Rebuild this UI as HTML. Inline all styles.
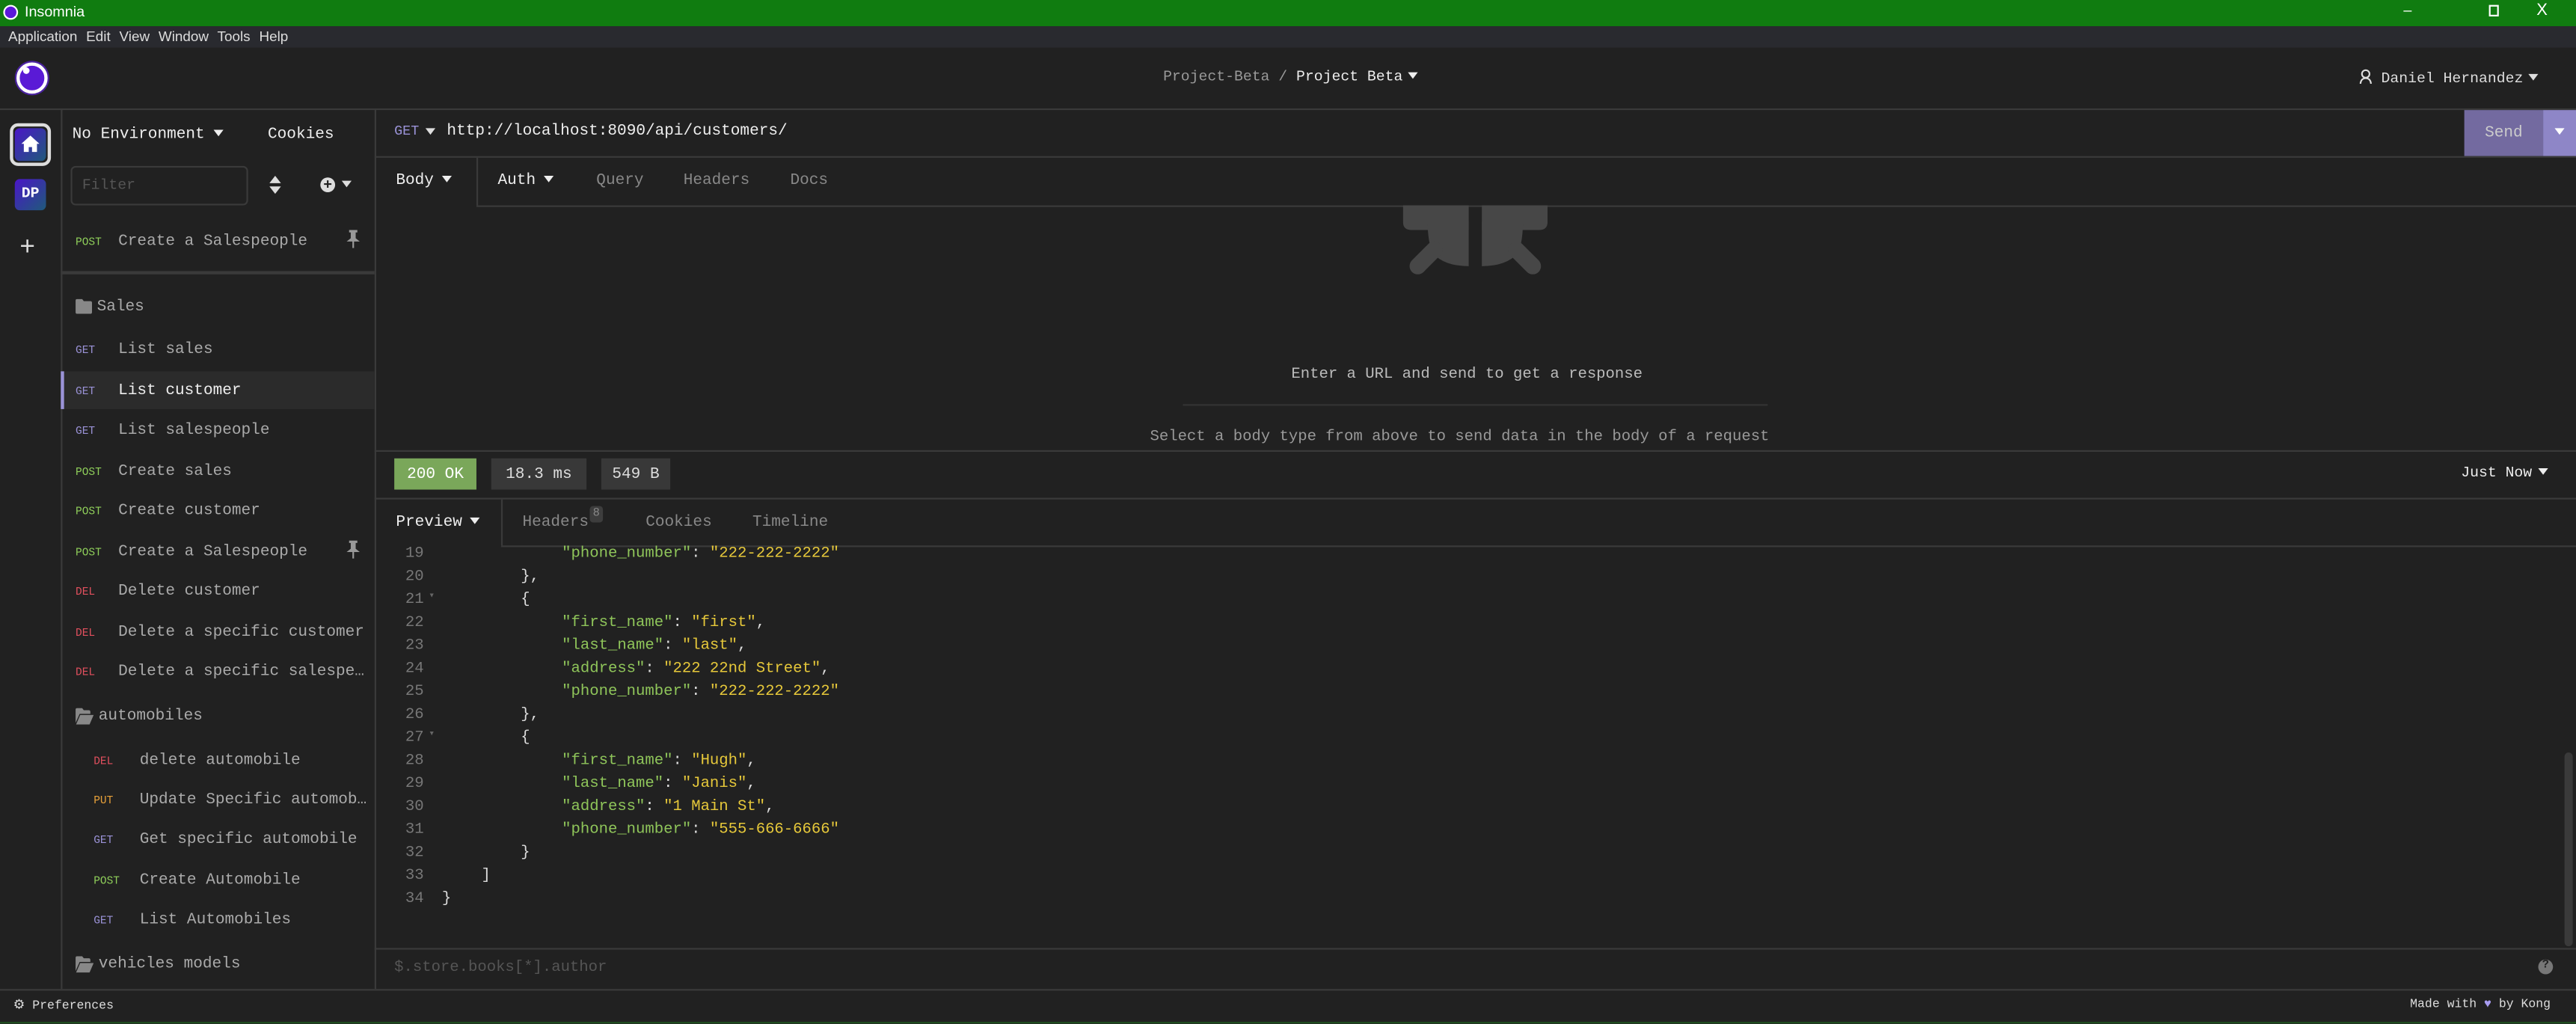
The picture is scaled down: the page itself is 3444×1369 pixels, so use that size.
<!DOCTYPE html>
<html><head><meta charset="utf-8">
<style>
*{margin:0;padding:0;box-sizing:border-box}
html,body{width:3444px;height:1369px;overflow:hidden;background:#212121}
#w{position:absolute;left:0;top:0;width:1568px;height:623px;transform:scale(2.19643);transform-origin:0 0;background:#212121;font-family:"Liberation Mono",monospace;color:#ddd;font-size:9.6px}
.a{position:absolute;white-space:nowrap}
.hl{position:absolute;background:#3a3a3a}
.vl{position:absolute;background:#3a3a3a;width:1px}
.m{font-size:6.6px}
.get{color:#9b93d8}.post{color:#8fcf5a}.del{color:#e2505e}.put{color:#e8a13a}
.it{color:#aaa}
.tri{display:inline-block;width:0;height:0;border-left:3px solid transparent;border-right:3px solid transparent;border-top:4px solid currentColor;vertical-align:middle;margin-left:3px}
.k{color:#8fc55a}.s{color:#e6c83a}.p{color:#ddd}
.ln{position:absolute;left:240px;width:18px;text-align:right;color:#777;font-size:9.4px}
.cd{position:absolute;font-size:9.4px;white-space:pre;color:#ddd}
</style></head><body><div id="w">
<!-- title bar -->
<div class="a" style="left:0;top:0;width:1568px;height:15.5px;background:#107c10"></div>
<div class="a" style="left:2px;top:3px;width:9px;height:9px;border-radius:50%;background:#5b19d9;border:1px solid #fff"></div>
<div class="a" style="left:15px;top:2px;font-family:'Liberation Sans',sans-serif;font-size:9px;color:#fff">Insomnia</div>
<div class="a" style="left:1463px;top:1px;font-family:'Liberation Sans',sans-serif;font-size:9px;color:#fff">–</div>
<div class="a" style="left:1515px;top:3px;width:6px;height:7px;border:1px solid #fff"></div>
<div class="a" style="left:1544px;top:1px;font-family:'Liberation Sans',sans-serif;font-size:10px;color:#fff">X</div>
<!-- menu -->
<div class="a" style="left:0;top:15.5px;width:1568px;height:13.5px;background:#292a2f"></div>
<div class="a" style="left:5px;top:16.5px;font-family:'Liberation Sans',sans-serif;font-size:8.6px;color:#ddd;word-spacing:3px">Application Edit View Window Tools Help</div>
<!-- header -->
<div class="a" style="left:10px;top:38px;width:19px;height:19px;border-radius:50%;background:#5a1ad6;border:2px solid #fff;box-shadow:0 0 0 1px #4a22a0"></div>
<div class="a" style="left:14px;top:41px;width:4px;height:4px;border-radius:50%;background:#fff"></div>
<div class="a" style="left:708px;top:41.5px;font-size:9px;color:#999">Project-Beta / <span style="color:#eee">Project Beta</span><span class="tri" style="color:#eee"></span></div>
<div class="a" style="left:1436px;top:41.5px;font-size:9px;color:#ddd"><svg width="8" height="9" viewBox="0 0 8 9" style="vertical-align:-1px"><circle cx="4" cy="3" r="2.3" fill="none" stroke="#ddd" stroke-width="1"/><path d="M0.8 9 C1 6.5 2.5 5.6 4 5.6 C5.5 5.6 7 6.5 7.2 9" fill="none" stroke="#ddd" stroke-width="1"/></svg> Daniel Hernandez<span class="tri"></span></div>
<div class="hl" style="left:0;top:65.5px;width:1568px;height:1px"></div>
<!-- left icon rail -->
<div class="vl" style="left:36.5px;top:66px;height:536px"></div>
<div class="a" style="left:6px;top:75px;width:25px;height:26px;border:2px solid #ddd;border-radius:5px;background:#212121"></div>
<div class="a" style="left:9px;top:78px;width:19px;height:20px;border-radius:3px;background:linear-gradient(135deg,#4a16c8,#1f5a7a)"></div>
<svg class="a" style="left:13px;top:82px" width="11" height="11" viewBox="0 0 11 11"><path d="M5.5 0.5 L11 5.5 L9.5 5.5 L9.5 10.5 L6.5 10.5 L6.5 7.5 L4.5 7.5 L4.5 10.5 L1.5 10.5 L1.5 5.5 L0 5.5 Z" fill="#fff"/></svg>
<div class="a" style="left:9px;top:109px;width:19px;height:19px;border-radius:3px;background:linear-gradient(135deg,#4a16c8,#1f5a7a);color:#fff;font-weight:bold;font-size:9px;text-align:center;line-height:19px">DP</div>
<div class="a" style="left:12px;top:142px;font-family:'Liberation Sans',sans-serif;font-size:16px;color:#ddd;line-height:18px">+</div>
<!-- left panel -->
<div class="vl" style="left:227.5px;top:66px;height:536px"></div>
<div class="a" style="left:44px;top:75.5px;color:#eee">No Environment<span class="tri" style="margin-left:5px"></span></div>
<div class="a" style="left:163px;top:75.5px;color:#eee">Cookies</div>
<div class="a" style="left:43px;top:101px;width:108px;height:24px;border:1px solid #3a3a3a;border-radius:3px"></div>
<div class="a" style="left:50px;top:108px;color:#555;font-size:9px">Filter</div>
<svg class="a" style="left:164px;top:107px" width="7" height="11" viewBox="0 0 7 11"><path d="M3.5 0 L7 4.5 L0 4.5Z M3.5 11 L7 6.5 L0 6.5Z" fill="#ddd"/></svg>
<div class="a" style="left:195px;top:108px;width:9px;height:9px;border-radius:50%;background:#ddd;color:#212121;font-size:9px;line-height:8.5px;text-align:center;font-family:'Liberation Sans',sans-serif;font-weight:bold">+</div>
<div class="a" style="left:205px;top:107px;color:#ddd"><span class="tri"></span></div>
<div class="a m post" style="left:46px;top:144px">POST</div>
<div class="a it" style="left:72px;top:141px">Create a Salespeople</div>
<svg class="a" style="left:211px;top:140px" width="8" height="11" viewBox="0 0 8 11"><path d="M1.5 0 H6.5 V1.5 L5.5 1.5 V5 L8 7 H0 L2.5 5 V1.5 H1.5Z M3.5 7 H4.5 V11 H3.5Z" fill="#999"/></svg>
<div class="hl" style="left:37px;top:164.5px;width:191px;height:2px"></div>
<svg class="a" style="left:46px;top:182px" width="10" height="9" viewBox="0 0 10 9"><path d="M0 1 Q0 0 1 0 H4 L5 1.3 H9 Q10 1.3 10 2.3 V8 Q10 9 9 9 H1 Q0 9 0 8Z" fill="#888"/></svg>
<div class="a it" style="left:59px;top:181px">Sales</div>
<div class="a m get" style="left:46px;top:210px">GET</div><div class="a it" style="left:72px;top:207px">List sales</div>
<div class="a" style="left:37px;top:226px;width:191px;height:23px;background:#2b2b2b;border-left:2px solid #9b93d8"></div>
<div class="a m get" style="left:46px;top:235px">GET</div><div class="a" style="left:72px;top:232px;color:#eee">List customer</div>
<div class="a m get" style="left:46px;top:259px">GET</div><div class="a it" style="left:72px;top:256px">List salespeople</div>
<div class="a m post" style="left:46px;top:284px">POST</div><div class="a it" style="left:72px;top:281px">Create sales</div>
<div class="a m post" style="left:46px;top:308px">POST</div><div class="a it" style="left:72px;top:305px">Create customer</div>
<div class="a m post" style="left:46px;top:333px">POST</div><div class="a it" style="left:72px;top:330px">Create a Salespeople</div>
<svg class="a" style="left:211px;top:329px" width="8" height="11" viewBox="0 0 8 11"><path d="M1.5 0 H6.5 V1.5 L5.5 1.5 V5 L8 7 H0 L2.5 5 V1.5 H1.5Z M3.5 7 H4.5 V11 H3.5Z" fill="#999"/></svg>
<div class="a m del" style="left:46px;top:357px">DEL</div><div class="a it" style="left:72px;top:354px">Delete customer</div>
<div class="a m del" style="left:46px;top:382px">DEL</div><div class="a it" style="left:72px;top:379px">Delete a specific customer</div>
<div class="a m del" style="left:46px;top:406px">DEL</div><div class="a it" style="left:72px;top:403px">Delete a specific salespe…</div>
<svg class="a" style="left:46px;top:431px" width="11" height="10" viewBox="0 0 11 10"><path d="M0 1 Q0 0 1 0 H4 L5 1.3 H8 Q9 1.3 9 2.3 V3.5 H2.5 L0 9Z M2.8 4.2 H11 L8.5 10 H0.3Z" fill="#888"/></svg>
<div class="a it" style="left:60px;top:430px">automobiles</div>
<div class="a m del" style="left:57px;top:460px">DEL</div><div class="a it" style="left:85px;top:457px">delete automobile</div>
<div class="a m put" style="left:57px;top:484px">PUT</div><div class="a it" style="left:85px;top:481px">Update Specific automob…</div>
<div class="a m get" style="left:57px;top:508px">GET</div><div class="a it" style="left:85px;top:505px">Get specific automobile</div>
<div class="a m post" style="left:57px;top:533px">POST</div><div class="a it" style="left:85px;top:530px">Create Automobile</div>
<div class="a m get" style="left:57px;top:557px">GET</div><div class="a it" style="left:85px;top:554px">List Automobiles</div>
<svg class="a" style="left:46px;top:582px" width="11" height="10" viewBox="0 0 11 10"><path d="M0 1 Q0 0 1 0 H4 L5 1.3 H8 Q9 1.3 9 2.3 V3.5 H2.5 L0 9Z M2.8 4.2 H11 L8.5 10 H0.3Z" fill="#888"/></svg>
<div class="a it" style="left:60px;top:581px">vehicles models</div>
<!-- url bar -->
<div class="a" style="left:240px;top:75px;font-size:8.4px;color:#9b93d8">GET<span class="tri" style="color:#ddd;margin-left:4px"></span></div>
<div class="a" style="left:272px;top:74px;color:#eee">http://localhost:8090/api/customers/</div>
<div class="a" style="left:1500px;top:66.5px;width:48px;height:28.5px;background:#736aa0;color:#ccc;text-align:center;line-height:28px">Send</div>
<div class="a" style="left:1548px;top:66.5px;width:20px;height:28.5px;background:#8e86c7;color:#fff;text-align:center;line-height:27px"><span class="tri" style="margin:0"></span></div>
<div class="hl" style="left:228px;top:95px;width:1340px;height:1px"></div>
<!-- request tabs -->
<div class="a" style="left:241px;top:104px;color:#eee">Body<span class="tri" style="margin-left:5px"></span></div>
<div class="vl" style="left:290px;top:96px;height:29px"></div>
<div class="hl" style="left:290px;top:124.5px;width:1278px;height:1px"></div>
<div class="a" style="left:303px;top:104px;color:#eee">Auth<span class="tri" style="margin-left:5px"></span></div>
<div class="a" style="left:363px;top:104px;color:#888">Query</div>
<div class="a" style="left:416px;top:104px;color:#888">Headers</div>
<div class="a" style="left:481px;top:104px;color:#888">Docs</div>
<!-- empty body icon -->
<svg class="a" style="left:854px;top:125px" width="88" height="43" viewBox="0 0 88 43"><g fill="#474747"><path d="M0 0 H40 V15 H5 Q0 15 0 10Z"/><path d="M15 10 H40 V37 Q25 37 18 29 Q15 22 15 10Z"/><path d="M48 0 H88 V10 Q88 15 83 15 H48Z"/><path d="M48 10 H73 Q73 22 70 29 Q63 37 48 37Z"/></g><g stroke="#474747" stroke-width="10" stroke-linecap="round"><line x1="19" y1="27" x2="9" y2="37"/><line x1="69" y1="27" x2="79" y2="37"/></g></svg>
<div class="a" style="left:786px;top:222px;color:#bbb;font-size:9.4px">Enter a URL and send to get a response</div>
<div class="a" style="left:720px;top:246px;width:356px;height:1px;background:#333"></div>
<div class="a" style="left:700px;top:259.5px;color:#999;font-size:9.4px">Select a body type from above to send data in the body of a request</div>
<div class="hl" style="left:228px;top:274px;width:1340px;height:1px"></div>
<!-- status -->
<div class="a" style="left:240px;top:279px;width:50px;height:19px;background:#7aa75a;color:#fff;text-align:center;line-height:19px">200 OK</div>
<div class="a" style="left:299px;top:279px;width:58px;height:19px;background:#383838;color:#ddd;text-align:center;line-height:19px">18.3 ms</div>
<div class="a" style="left:366px;top:279px;width:42px;height:19px;background:#383838;color:#ddd;text-align:center;line-height:19px">549 B</div>
<div class="a" style="left:1498px;top:282.5px;color:#eee;font-size:9px">Just Now<span class="tri" style="margin-left:4px"></span></div>
<div class="hl" style="left:228px;top:303px;width:1340px;height:1px"></div>
<!-- response tabs -->
<div class="a" style="left:241px;top:311.5px;color:#eee">Preview<span class="tri" style="margin-left:5px"></span></div>
<div class="vl" style="left:305px;top:304px;height:28px"></div>
<div class="hl" style="left:305px;top:331.5px;width:1263px;height:1px"></div>
<div class="a" style="left:318px;top:311.5px;color:#888">Headers</div>
<div class="a" style="left:359px;top:308px;width:8px;height:10px;border-radius:2px;background:#3d3d3d;color:#888;font-size:7px;text-align:center;line-height:10px">8</div>
<div class="a" style="left:393px;top:311.5px;color:#888">Cookies</div>
<div class="a" style="left:458px;top:311.5px;color:#888">Timeline</div>
<!-- code -->
<div class="ln" style="top:331px">19</div><div class="cd" style="left:342px;top:331px"><span class="k">"phone_number"</span>: <span class="s">"222-222-2222"</span></div>
<div class="ln" style="top:345px">20</div><div class="cd" style="left:317px;top:345px">},</div>
<div class="ln" style="top:359px">21</div><div class="a" style="left:261px;top:359px;color:#666;font-size:6px">▾</div><div class="cd" style="left:317px;top:359px">{</div>
<div class="ln" style="top:373px">22</div><div class="cd" style="left:342px;top:373px"><span class="k">"first_name"</span>: <span class="s">"first"</span>,</div>
<div class="ln" style="top:387px">23</div><div class="cd" style="left:342px;top:387px"><span class="k">"last_name"</span>: <span class="s">"last"</span>,</div>
<div class="ln" style="top:401px">24</div><div class="cd" style="left:342px;top:401px"><span class="k">"address"</span>: <span class="s">"222 22nd Street"</span>,</div>
<div class="ln" style="top:415px">25</div><div class="cd" style="left:342px;top:415px"><span class="k">"phone_number"</span>: <span class="s">"222-222-2222"</span></div>
<div class="ln" style="top:429px">26</div><div class="cd" style="left:317px;top:429px">},</div>
<div class="ln" style="top:443px">27</div><div class="a" style="left:261px;top:443px;color:#666;font-size:6px">▾</div><div class="cd" style="left:317px;top:443px">{</div>
<div class="ln" style="top:457px">28</div><div class="cd" style="left:342px;top:457px"><span class="k">"first_name"</span>: <span class="s">"Hugh"</span>,</div>
<div class="ln" style="top:471px">29</div><div class="cd" style="left:342px;top:471px"><span class="k">"last_name"</span>: <span class="s">"Janis"</span>,</div>
<div class="ln" style="top:485px">30</div><div class="cd" style="left:342px;top:485px"><span class="k">"address"</span>: <span class="s">"1 Main St"</span>,</div>
<div class="ln" style="top:499px">31</div><div class="cd" style="left:342px;top:499px"><span class="k">"phone_number"</span>: <span class="s">"555-666-6666"</span></div>
<div class="ln" style="top:513px">32</div><div class="cd" style="left:317px;top:513px">}</div>
<div class="ln" style="top:527px">33</div><div class="cd" style="left:293px;top:527px">]</div>
<div class="ln" style="top:541px">34</div><div class="cd" style="left:269px;top:541px">}</div>
<div class="a" style="left:1561px;top:458px;width:5px;height:118px;border-radius:3px;background:#3a3a3a"></div>
<div class="hl" style="left:228px;top:576.5px;width:1340px;height:1px"></div>
<div class="a" style="left:240px;top:582.5px;color:#555;font-size:9.4px">$.store.books[*].author</div>
<div class="a" style="left:1545px;top:584px;width:9px;height:9px;border-radius:50%;background:#777;color:#222;font-size:7px;text-align:center;line-height:9px;font-weight:bold">?</div>
<div class="hl" style="left:0;top:601.5px;width:1568px;height:1px"></div>
<!-- footer -->
<div class="a" style="left:8px;top:607px;color:#ddd;font-size:7.5px"><span style="font-family:'DejaVu Sans',sans-serif;font-size:8px">⚙</span> Preferences</div>
<div class="a" style="left:1467px;top:608px;color:#ddd;font-size:7.5px">Made with <span style="color:#a89cf0">♥</span> by Kong</div>
<div class="a" style="left:0;top:621.5px;width:1568px;height:1.5px;background:#1f4f1f"></div>
</div></body></html>
